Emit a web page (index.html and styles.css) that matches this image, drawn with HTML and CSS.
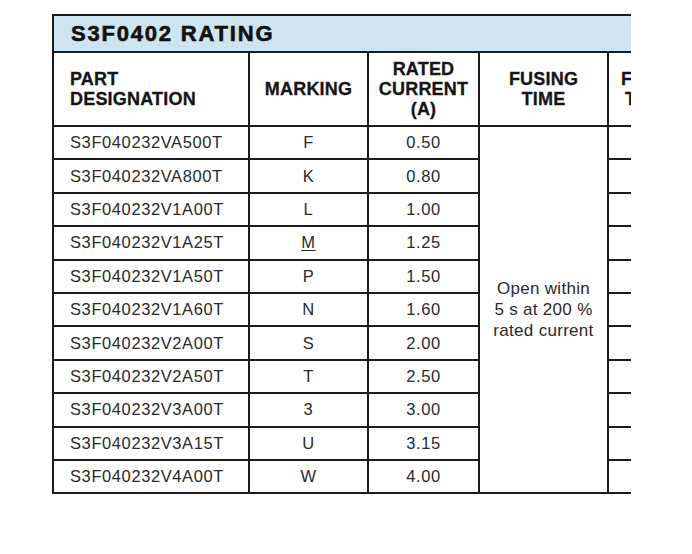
FILE: index.html
```html
<!DOCTYPE html>
<html>
<head>
<meta charset="utf-8">
<link rel="stylesheet" href="styles.css">
</head>
<body>
<div class="clip">
<table class="rating">
  <colgroup>
    <col class="c1"><col class="c2"><col class="c3"><col class="c4"><col class="c5">
  </colgroup>
  <thead>
    <tr class="title-row"><th colspan="5" class="title">S3F0402 RATING</th></tr>
    <tr class="head-row">
      <th class="left">PART<br>DESIGNATION</th>
      <th>MARKING</th>
      <th>RATED<br>CURRENT<br>(A)</th>
      <th>FUSING<br>TIME</th>
      <th class="cut"><span class="l1">FUSE</span><br><span class="l2">TEMP</span></th>
    </tr>
  </thead>
  <tbody>
    <tr><td class="left">S3F040232VA500T</td><td>F</td><td>0.50</td><td rowspan="11" class="fusing">Open within<br>5 s at 200 %<br>rated current</td><td></td></tr>
    <tr><td class="left">S3F040232VA800T</td><td>K</td><td>0.80</td><td></td></tr>
    <tr><td class="left">S3F040232V1A00T</td><td>L</td><td>1.00</td><td></td></tr>
    <tr><td class="left">S3F040232V1A25T</td><td><span class="ul">M</span></td><td>1.25</td><td></td></tr>
    <tr><td class="left">S3F040232V1A50T</td><td>P</td><td>1.50</td><td></td></tr>
    <tr><td class="left">S3F040232V1A60T</td><td>N</td><td>1.60</td><td></td></tr>
    <tr><td class="left">S3F040232V2A00T</td><td>S</td><td>2.00</td><td></td></tr>
    <tr><td class="left">S3F040232V2A50T</td><td>T</td><td>2.50</td><td></td></tr>
    <tr><td class="left">S3F040232V3A00T</td><td>3</td><td>3.00</td><td></td></tr>
    <tr><td class="left">S3F040232V3A15T</td><td>U</td><td>3.15</td><td></td></tr>
    <tr><td class="left">S3F040232V4A00T</td><td>W</td><td>4.00</td><td></td></tr>
  </tbody>
</table>
</div>
</body>
</html>
```
FILE: styles.css
```css
html, body {
  margin: 0;
  padding: 0;
  background: #ffffff;
}
body {
  font-family: "Liberation Sans", Arial, sans-serif;
  color: #262626;
}
.clip {
  margin-left: 51px;
  margin-top: 13px;
  width: 579px;
  overflow: hidden;
  padding: 1px 0 2px 1px;
}
.rating {
  border-collapse: collapse;
  table-layout: fixed;
  width: 695px;
  border: 2px solid #1c1c1c;
}
.c1 { width: 196px; }
.c2 { width: 119px; }
.c3 { width: 111px; }
.c4 { width: 129px; }
.c5 { width: 140px; }
.rating th, .rating td {
  border: 2px solid #1c1c1c;
  padding: 0;
  text-align: center;
  vertical-align: middle;
}
.title-row th {
  height: 35px;
  background: #cfe4f1;
  text-align: left;
  padding-left: 17px;
  font-size: 22px;
  font-weight: bold;
  letter-spacing: 1.8px;
  color: #111;
  -webkit-text-stroke: 0.6px #111;
}
.head-row th {
  height: 72px;
  font-size: 18px;
  font-weight: bold;
  line-height: 20px;
  color: #151515;
  letter-spacing: 0.2px;
  -webkit-text-stroke: 0.3px #151515;
}
.head-row th.left {
  text-align: left;
  padding-left: 16px;
}
.head-row th.cut {
  text-align: left;
  padding-left: 12px;
}
.cut .l2 { padding-left: 4px; }
.rating td {
  height: 31.4px;
  font-size: 16.5px;
  letter-spacing: 0.6px;
  color: #2a2a2a;
}
.rating td.left {
  text-align: left;
  padding-left: 16px;
}
.rating td.fusing {
  line-height: 21px;
  letter-spacing: 0.3px;
  font-size: 17px;
}
.ul {
  text-decoration: underline;
  text-underline-offset: 2px;
}
```
